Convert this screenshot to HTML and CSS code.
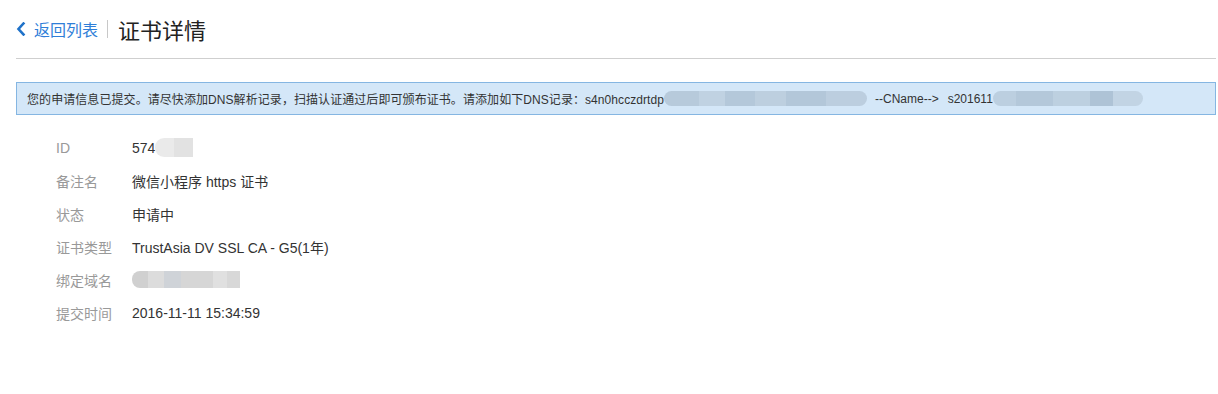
FILE: index.html
```html
<!DOCTYPE html>
<html lang="zh-CN">
<head>
<meta charset="utf-8">
<title>证书详情</title>
<link rel="stylesheet" href="styles.css">
</head>
<body>
<div class="page">
  <div class="header">
    <a class="back" href="#">
      <svg class="chev" width="10" height="14" viewBox="0 0 10 14"><path d="M7.5 1.5 L2.5 7 L7.5 12.5" fill="none" stroke="#1f72c9" stroke-width="2.6" stroke-linecap="square"/></svg>
      <span class="back-text">返回列表</span>
    </a>
    <span class="sep"></span>
    <h1 class="title">证书详情</h1>
  </div>
  <div class="alert">
    <span class="msg">您的申请信息已提交。请尽快添加DNS解析记录，扫描认证通过后即可颁布证书。请添加如下DNS记录：s4n0hcczdrtdp</span><span class="blur blur-a"></span><span class="cname">--CName--&gt;</span><span>s201611</span><span class="blur blur-b"></span>
  </div>
  <div class="details">
    <div class="row"><span class="label">ID</span><span class="value">574<span class="blur blur-id"></span></span></div>
    <div class="row"><span class="label">备注名</span><span class="value">微信小程序 https 证书</span></div>
    <div class="row"><span class="label">状态</span><span class="value">申请中</span></div>
    <div class="row"><span class="label">证书类型</span><span class="value">TrustAsia DV SSL CA - G5(1年)</span></div>
    <div class="row"><span class="label">绑定域名</span><span class="value"><span class="blur blur-dom"></span></span></div>
    <div class="row"><span class="label">提交时间</span><span class="value">2016-11-11 15:34:59</span></div>
  </div>
</div>
</body>
</html>
```

FILE: styles.css
```css
html, body {
  margin: 0;
  padding: 0;
  background: #fff;
}
body {
  font-family: "Liberation Sans", "Noto Sans CJK SC", sans-serif;
  color: #333;
}
.page {
  padding: 0 2px 0 16px;
}
.header {
  display: flex;
  align-items: center;
  height: 59px;
  border-bottom: 1px solid #cfcfcf;
  box-sizing: border-box;
}
.back {
  display: flex;
  align-items: center;
  text-decoration: none;
  color: #2f7ed8;
  font-size: 16px;
}
.chev {
  margin-right: 8px;
}
.sep {
  width: 1px;
  height: 18px;
  background: #c8c8c8;
  margin: 0 10px 0 9px;
}
.title {
  margin: 0;
  font-size: 22px;
  font-weight: normal;
  color: #222;
}
.alert {
  margin-top: 23px;
  height: 33px;
  box-sizing: border-box;
  border: 1px solid #85b6e2;
  background: #d4e7f8;
  display: flex;
  align-items: center;
  padding-left: 10px;
  font-size: 12px;
  color: #333;
  white-space: nowrap;
}
.msg {
  letter-spacing: 0.07px;
}
.blur {
  display: inline-block;
  height: 15px;
  border-radius: 8px;
}
.blur-a {
  width: 203px;
  background: linear-gradient(90deg, #b7cadb 0 17%, #c0d2e2 17% 30%, #b4c8da 30% 45%, #bdcfdf 45% 60%, #b3c7d9 60% 80%, #bccedf 80% 100%);
  margin-right: 8px;
}
.cname {
  margin-right: 9px;
}
.blur-b {
  width: 150px;
  background: linear-gradient(90deg, #bccfe0 0 15%, #b4c8da 15% 40%, #bdd0e0 40% 65%, #aec3d6 65% 80%, #c2d4e4 80% 100%);
}
.details {
  padding: 16px 0 0 40px;
}
.row {
  display: flex;
  align-items: center;
  height: 33px;
  font-size: 14px;
}
.label {
  width: 76px;
  color: #999;
}
.value {
  display: flex;
  align-items: center;
  color: #333;
}
.blur-id {
  width: 38px;
  height: 19px;
  border-radius: 9px 0 0 9px;
  background: linear-gradient(90deg, #eaeaea 0 50%, #e2e2e2 50% 100%);
}
.blur-dom {
  width: 108px;
  height: 17px;
  border-radius: 8px 0 0 8px;
  background: linear-gradient(90deg, #d0d0d0 0 15%, #dcdcdc 15% 30%, #cfd3d8 30% 45%, #d6d6d6 45% 75%, #e0e0e0 75% 88%, #d8d8d8 88% 100%);
}
```
